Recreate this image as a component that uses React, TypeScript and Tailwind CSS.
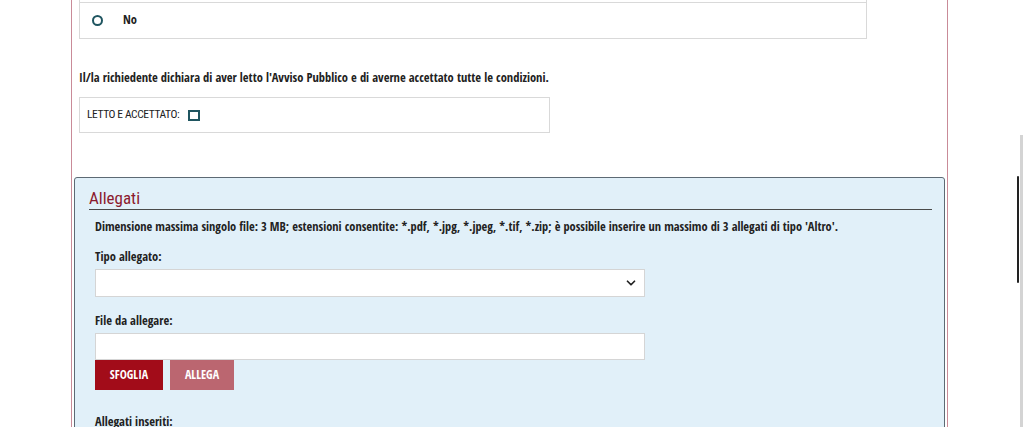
import { ChevronDown } from "lucide-react";

function Field({ label, children }: { label: string; children: React.ReactNode }) {
  return (
    <div className="flex flex-col">
      <label className="text-[12.5px] font-bold leading-[16px] text-[#222] mb-[4px]">{label}</label>
      {children}
    </div>
  );
}

export default function App() {
  return (
    <div className="relative w-[1023px] h-[427px] overflow-hidden bg-white font-['Open_Sans_Condensed','Roboto_Condensed',sans-serif]">
      {/* main form column */}
      <div className="ml-[71px] w-[877px] h-full border-x border-[#c98b98]">
        {/* radio group (previous option scrolled out of view) */}
        <div className="ml-[7px] w-[788px] border-x border-b border-[#d9d9d9] pt-[2px]">
          <div className="h-[36px] border-t border-[#d9d9d9] flex items-center pl-[12px]">
            <span className="w-[11px] h-[11px] rounded-full border-2 border-[#1f5560]" />
            <span className="ml-[20px] text-[12.5px] font-bold text-[#222]">No</span>
          </div>
        </div>

        <p className="ml-[7px] mt-[31px] text-[12.5px] font-bold leading-[16px] text-[#222]">
          Il/la richiedente dichiara di aver letto l'Avviso Pubblico e di averne accettato tutte le condizioni.
        </p>

        <div className="ml-[7px] mt-[11px] w-[471px] h-[36px] border border-[#d9d9d9] flex items-center pl-[7px]">
          <span className="font-['Roboto_Condensed',sans-serif] text-[11.5px] tracking-[-0.4px] font-normal text-[#222]">LETTO E ACCETTATO:</span>
          <span className="ml-[9px] w-[12px] h-[11px] border-2 border-[#1f5560]" />
        </div>

        {/* allegati panel */}
        <div className="ml-[2px] mt-[44px] w-[871px] h-[300px] rounded-[3px] border border-[#5d6a74] bg-[#e1f0f9] pl-[14px] pr-[12px] pt-[10px]">
          <h2 className="font-['Roboto_Condensed',sans-serif] font-normal text-[17px] leading-[20px] text-[#8b1a2e] border-b border-[#4a4a4a] pb-[1px]">Allegati</h2>
          <div className="pl-[6px]">
            <p className="mt-[9px] text-[12.4px] font-bold leading-[16px] text-[#222]">
              Dimensione massima singolo file: 3 MB; estensioni consentite: *.pdf, *.jpg, *.jpeg, *.tif, *.zip; è possibile inserire un massimo di 3 allegati di tipo 'Altro'.
            </p>
            <div className="mt-[14px]">
              <Field label="Tipo allegato:">
                <div className="w-[550px] h-[28px] bg-white border border-[#d5d5d5] flex items-center justify-end pr-[6px]">
                  <ChevronDown size={14} strokeWidth={3} className="text-[#222]" />
                </div>
              </Field>
            </div>
            <div className="mt-[16px]">
              <Field label="File da allegare:">
                <div className="w-[550px] h-[27px] bg-white border border-[#d5d5d5]" />
              </Field>
            </div>
            <div className="flex gap-[7px]">
              <button className="w-[68px] h-[30px] bg-[#a20c19] text-white text-[12px] font-bold">SFOGLIA</button>
              <button className="w-[64px] h-[30px] bg-[#bb6670] text-white text-[12px] font-bold">ALLEGA</button>
            </div>
            <p className="mt-[24px] text-[12.5px] font-bold leading-[16px] text-[#222]">Allegati inseriti:</p>
          </div>
        </div>
      </div>

      {/* overlay scrollbar */}
      <div className="absolute right-0 top-[135px] w-[3px] h-[292px] bg-[#d4d4d4]" />
      <div className="absolute right-[4px] top-[176px] w-[2px] h-[107px] rounded-full bg-[#222]" />
    </div>
  );
}
